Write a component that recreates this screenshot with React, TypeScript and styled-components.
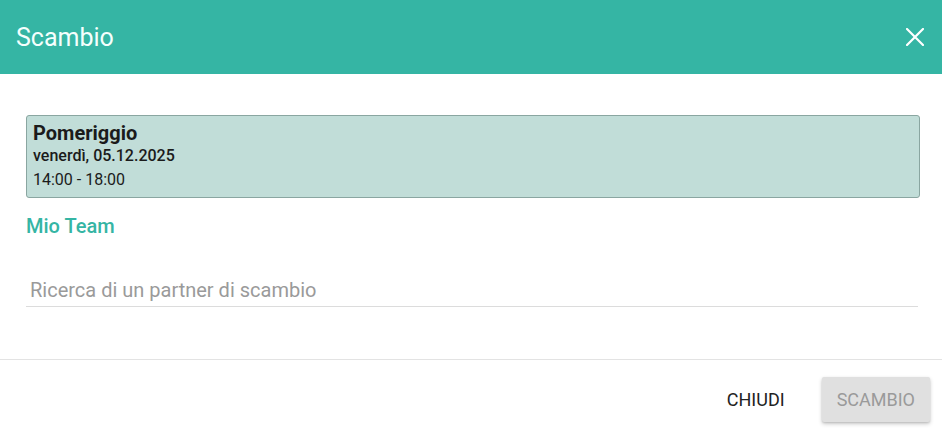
import React from 'react';
import styled, { createGlobalStyle } from 'styled-components';

const GlobalStyle = createGlobalStyle`
  html, body {
    margin: 0;
    padding: 0;
    background: #ffffff;
    font-family: Roboto, "Liberation Sans", sans-serif;
  }
  * {
    box-sizing: border-box;
  }
`;

const Dialog = styled.div`
  width: 942px;
  height: 431px;
  display: flex;
  flex-direction: column;
  background: #fff;
  overflow: hidden;
`;

const Header = styled.header`
  height: 74px;
  background: #35b5a4;
  display: flex;
  align-items: center;
  justify-content: space-between;
  padding: 0 16px 0 16px;
  flex-shrink: 0;
`;

const Title = styled.h1`
  margin: 0;
  font-size: 25px;
  font-weight: 400;
  color: #f4fffd;
`;

const CloseButton = styled.button`
  border: none;
  background: transparent;
  padding: 0;
  width: 22px;
  height: 22px;
  display: flex;
  align-items: center;
  justify-content: center;
  cursor: pointer;
`;

const Body = styled.div`
  flex: 1;
  padding: 41px 24px 0 26px;
  display: flex;
  flex-direction: column;
`;

const ShiftCard = styled.div`
  background: #c1ddd8;
  border: 1px solid #8aa6a1;
  border-radius: 3px;
  padding: 5px 6px 5px 6px;
  display: flex;
  flex-direction: column;
  width: 894px;
`;

const ShiftName = styled.div`
  font-size: 20px;
  font-weight: 700;
  color: #1b1b1b;
  line-height: 24px;
`;

const ShiftLine = styled.div<{ $bold?: boolean }>`
  font-size: 16px;
  font-weight: ${({ $bold }) => ($bold ? 500 : 400)};
  color: #1b1b1b;
  line-height: ${({ $bold }) => ($bold ? '20px' : '24px')};
  margin-top: ${({ $bold }) => ($bold ? '1px' : '2px')};
`;

const TeamLabel = styled.div`
  margin-top: 16px;
  font-size: 20px;
  font-weight: 500;
  color: #35b5a4;
  line-height: 24px;
`;

const SearchField = styled.input`
  margin-top: 40px;
  width: 892px;
  border: none;
  border-bottom: 1px solid #dcdcdc;
  padding: 0 0 4px 4px;
  font-family: Roboto, "Liberation Sans", sans-serif;
  font-size: 20px;
  line-height: 24px;
  color: #333;
  outline: none;
  background: transparent;

  &::placeholder {
    color: #9a9a9a;
  }
`;

const Footer = styled.footer`
  height: 72px;
  border-top: 1px solid #e3e3e3;
  display: flex;
  align-items: center;
  justify-content: flex-end;
  gap: 22px;
  padding: 0 12px 0 0;
  flex-shrink: 0;
`;

const ActionButton = styled.button<{ $disabled?: boolean }>`
  height: 45px;
  padding: 0 15px;
  border: none;
  border-radius: 2px;
  font-family: Roboto, "Liberation Sans", sans-serif;
  font-size: 18px;
  font-weight: 400;
  text-transform: uppercase;
  color: ${({ $disabled }) => ($disabled ? '#9a9a9a' : '#222')};
  background: ${({ $disabled }) => ($disabled ? '#e0e0e0' : 'transparent')};
  box-shadow: ${({ $disabled }) =>
    $disabled ? '0 2px 4px rgba(0,0,0,0.2), 0 1px 2px rgba(0,0,0,0.12)' : 'none'};
  margin-top: 8px;
  cursor: ${({ $disabled }) => ($disabled ? 'default' : 'pointer')};
`;

export default function App() {
  return (
    <>
      <GlobalStyle />
      <Dialog>
        <Header>
          <Title>Scambio</Title>
          <CloseButton aria-label="Chiudi">
            <svg width="18" height="18" viewBox="0 0 18 18">
              <path d="M1 1 L17 17 M17 1 L1 17" stroke="#ffffff" strokeWidth="2.2" strokeLinecap="square" />
            </svg>
          </CloseButton>
        </Header>
        <Body>
          <ShiftCard>
            <ShiftName>Pomeriggio</ShiftName>
            <ShiftLine $bold>venerdì, 05.12.2025</ShiftLine>
            <ShiftLine>14:00 - 18:00</ShiftLine>
          </ShiftCard>
          <TeamLabel>Mio Team</TeamLabel>
          <SearchField placeholder="Ricerca di un partner di scambio" />
        </Body>
        <Footer>
          <ActionButton>Chiudi</ActionButton>
          <ActionButton $disabled>Scambio</ActionButton>
        </Footer>
      </Dialog>
    </>
  );
}
